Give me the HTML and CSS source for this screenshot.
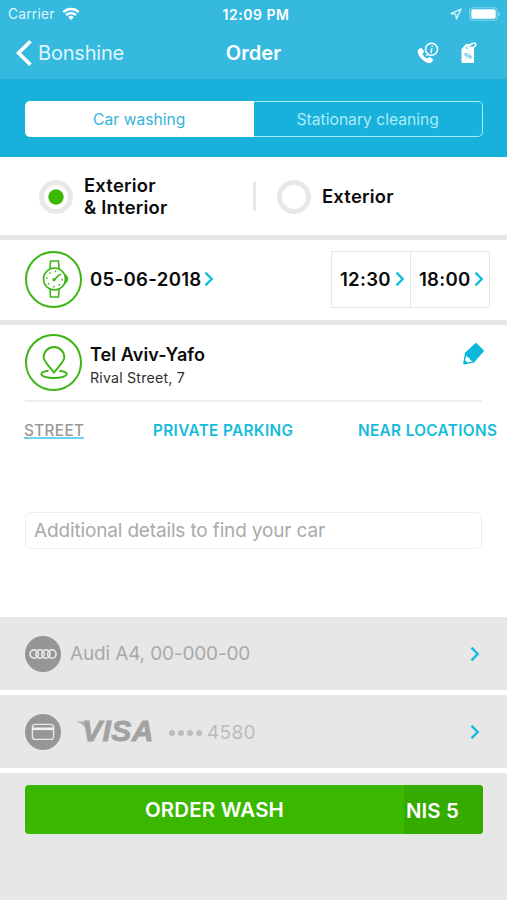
FILE: index.html
```html
<!DOCTYPE html>
<html lang="en">
<head>
<meta charset="utf-8">
<title>Order</title>
<link rel="stylesheet" href="styles.css">
</head>
<body>
<header class="header">
  <div class="status">
    <div class="status-left">
      <span class="carrier">Carrier</span>
      <svg class="wifi" width="18" height="14" viewBox="0 0 18 14" fill="none" stroke="#fff" stroke-width="2.4"><path d="M1.3 5.2a11 11 0 0 1 15.4 0M4.1 8.1a7 7 0 0 1 9.8 0"/><path d="M6.2 10.2a4 4 0 0 1 5.6 0L9 13z" fill="#fff" stroke="none"/></svg>
    </div>
    <span class="clock">12:09 PM</span>
    <div class="status-right">
      <svg width="12" height="12" viewBox="0 0 12 12" fill="none" stroke="#e4f7fc" stroke-width="1.3" stroke-linejoin="round"><path d="M11 1 1 5.7l4.8.5.6 4.8z"/></svg>
      <svg width="32" height="14" viewBox="0 0 32 14"><rect x=".7" y=".7" width="27.6" height="12.6" rx="3.3" fill="none" stroke="#7fd5ec" stroke-width="1.1"/><rect x="2.3" y="2.3" width="24.4" height="9.4" rx="1.8" fill="#fff"/><path d="M29.6 5v4q1.4-.7 1.4-2t-1.4-2" fill="#9fe0f2"/></svg>
    </div>
  </div>
  <nav class="nav">
    <a class="back">
      <svg width="16" height="26" viewBox="0 0 16 26" fill="none" stroke="#fff" stroke-width="3.7"><path d="M14.5 1.3 2.6 13l11.9 11.7"/></svg>
      <span class="back-label">Bonshine</span>
    </a>
    <h1 class="title">Order</h1>
    <div class="actions">
      <svg width="22" height="22" viewBox="0 0 22 22"><path d="M2.2 6.8 4.5 6l2.7 3.6-1.7 2.3c1.2 2.1 2.5 3.4 4.8 4.5l2.3-1.7 3.4 2.6-.8 2.5c-1.4 1.7-3.3 1.9-6.2.4C5 18 2 14.8 1 11.3c-.5-2.2 0-3.6 1.2-4.5z" fill="#fff"/><circle cx="14.5" cy="7.3" r="6" fill="none" stroke="#fff" stroke-width="1.5"/><path d="M10.5 11.5 8.5 14l3.6-.8" fill="#fff"/><path d="M15.2 4.3v.1M14.8 6.8l-.7 3.7" fill="none" stroke="#fff" stroke-width="1.5" stroke-linecap="round"/></svg>
      <svg class="tag" width="16" height="22" viewBox="0 0 16 22"><path d="M.5 7.300 4.800 2h4.700L13 6v13.700a1.300 1.300 0 0 1-1.300 1.300H1.800A1.300 1.300 0 0 1 .5 19.700z" fill="#fff"/><circle cx="6.300" cy="5.700" r="1.300" fill="#36b9df"/><path d="M6.500 5.800c1.500-3 5-5 7.500-4.600 1.600.7.500 3.200-1.600 4.100-1.700.8-3.800.8-5.900.5" fill="#36b9df" fill-opacity=".6" stroke="#fff" stroke-width="1.500"/><g fill="none" stroke="#72c9e3" stroke-width="1.100"><path d="m5.400 16 3.400-4.500"/><circle cx="4.900" cy="12.500" r="1.100"/><circle cx="9.300" cy="15" r="1.100"/></g></svg>
    </div>
  </nav>
</header>
<section class="segment-bar">
  <div class="segment">
    <div class="seg seg-on"><span>Car washing</span></div>
    <div class="seg seg-off"><span>Stationary cleaning</span></div>
  </div>
</section>
<main>
  <section class="types">
    <div class="type type-a"><span class="radio radio-on"></span><span class="type-label">Exterior<br>&amp; Interior</span></div>
    <span class="vline"></span>
    <div class="type"><span class="radio"></span><span class="type-label">Exterior</span></div>
  </section>
  <section class="when">
    <div class="round">
      <svg width="56" height="56" viewBox="0 0 56 56" fill="none" stroke="#3db615" stroke-width="1.6"><circle cx="28.5" cy="28" r="11"/><path d="m24 18.3.5-8.3h8l.5 8.3M24 37.7l.5 8.3h8l.5-8.3"/><path d="M39.7 24.5q3.600 3.500 0 7z" fill="#3db615"/><path d="m28 29 5.500-5.500" stroke-width="1.700"/><circle cx="28" cy="28.700" r="1.600" fill="#3db615" stroke="none"/><circle cx="28.500" cy="28" r="7.600" stroke-width="1.600" stroke-dasharray="1.500 4.469"/></svg>
    </div>
    <div class="date"><span>05-06-2018</span><svg class="chev" width="10" height="16" viewBox="0 0 10 16"><path d="m1.500 1.600 6.200 6.400-6.200 6.400"/></svg></div>
    <div class="times">
      <div class="time"><span>12:30</span><svg class="chev" width="10" height="16" viewBox="0 0 10 16"><path d="m1.500 1.600 6.200 6.400-6.200 6.400"/></svg></div>
      <div class="time"><span>18:00</span><svg class="chev" width="10" height="16" viewBox="0 0 10 16"><path d="m1.500 1.600 6.200 6.400-6.200 6.400"/></svg></div>
    </div>
  </section>
  <section class="where">
    <div class="address">
      <div class="round">
        <svg width="56" height="56" viewBox="0 0 56 56" fill="none" stroke="#3db615" stroke-width="1.900"><path d="M28 37.500C23 30.500 17.700 27 17.700 22.300a10.300 10.300 0 0 1 20.600 0C38.300 27 33 30.500 28 37.500z"/><path d="M22.500 35.800c-4.300.6-7.200 1.800-7.200 3.200 0 2.200 5.700 4 12.700 4s12.700-1.800 12.700-4c0-1.400-2.900-2.600-7.200-3.200"/></svg>
      </div>
      <div class="place"><strong class="city">Tel Aviv-Yafo</strong><span class="street">Rival Street, 7</span></div>
      <svg class="pencil" width="24" height="24" viewBox="0 0 24 24"><path d="M14.300 1.200q.7-.6 1.400 0l7 7q.6.700 0 1.400L13 20.500l-9.500 2q-1.600.2-1.300-1.400L4 10.700z" fill="#09b8da"/><path d="M5.400 12.800Q5.400 15.600 8.600 16q.2 2.800 3.300 3.200l-5.300 1.400-2.500-2.400z" fill="#fff"/></svg>
    </div>
    <div class="tabs"><span class="tab tab-on">STREET</span><span class="tab tab-b">PRIVATE PARKING</span><span class="tab">NEAR LOCATIONS</span></div>
    <div class="details"><span>Additional details to find your car</span></div>
  </section>
</main>
<section class="row">
  <div class="disc"><svg width="28" height="12" viewBox="0 0 28 12" fill="none" stroke="#e6e6e6" stroke-width="1.700"><circle cx="5.200" cy="6" r="4.200"/><circle cx="11.100" cy="6" r="4.200"/><circle cx="16.900" cy="6" r="4.200"/><circle cx="22.800" cy="6" r="4.200"/></svg></div>
  <span class="car">Audi A4, 00-000-00</span>
  <svg class="chev" width="10" height="16" viewBox="0 0 10 16"><path d="m1.500 1.600 6.200 6.400-6.200 6.400"/></svg>
</section>
<section class="row">
  <div class="disc"><svg width="24" height="18" viewBox="0 0 24 18"><rect x="1.400" y="1.400" width="21.200" height="15" rx="3" fill="none" stroke="#e8e8e8" stroke-width="1.400"/><path d="M1.400 4.500h21.200v2.600H1.400z" fill="#f2f2f2"/></svg></div>
  <svg class="flag" width="10" height="22" viewBox="0 0 10 22"><path d="M0 .5h7q2.500.3 2.800 2.500v6Q7 3 0 1.300z" fill="#b2b2b2"/></svg>
  <span class="visa">VISA</span>
  <span class="dots"><i></i><i></i><i></i><i></i></span>
  <span class="digits">4580</span>
  <svg class="chev" width="10" height="16" viewBox="0 0 10 16"><path d="m1.500 1.600 6.200 6.400-6.200 6.400"/></svg>
</section>
<footer class="footer">
  <div class="order"><div class="order-main"><span>ORDER WASH</span></div><div class="price"><span>NIS 5</span></div></div>
</footer>
</body>
</html>
```
FILE: styles.css
```css
* { box-sizing: border-box; }
body { margin: 0; width: 507px; height: 900px; overflow: hidden; display: flex; flex-direction: column; background: #fff; font-family: Inter, "Liberation Sans", sans-serif; color: #0b0b0b; white-space: nowrap; }
svg { display: block; flex: none; }
.header { height: 80px; background: #36b9df; border-bottom: 1px solid #20add4; color: #fff; }
.status { height: 28px; display: grid; grid-template-columns: 1fr auto 1fr; align-items: center; padding: 0 6px 0 8px; }
.status-left, .status-right { display: flex; align-items: center; }
.status-left { gap: 7px; }
.status-right { justify-content: flex-end; gap: 7px; }
.carrier { font-size: 13.8px; letter-spacing: .2px; color: #ddf6fc; }
.clock { font-size: 14px; font-weight: 600; letter-spacing: .5px; margin-left: 3px; }
.nav { height: 50px; display: grid; grid-template-columns: 1fr auto 1fr; align-items: center; padding: 0 30px 1px 16px; }
.back { display: flex; align-items: center; gap: 6px; }
.back-label { font-size: 20px; letter-spacing: -.2px; color: #dff6fc; }
.title { margin: 0 0 0 14px; font-size: 20px; font-weight: 600; letter-spacing: .1px; }
.actions { display: flex; justify-content: flex-end; gap: 22px; }
.segment-bar { height: 77px; background: #17b1dc; padding: 21px 24px 21px 25px; }
.segment { display: flex; height: 36px; }
.seg { flex: 1; display: flex; align-items: center; justify-content: center; font-size: 15.6px; letter-spacing: .03px; color: #aeecf8; }
.seg-on { background: #fff; color: #36b4dc; border-radius: 5px 0 0 5px; }
.seg-off { border: solid #a7e9f8; border-width: 1.5px 1.5px 1.5px 0; border-radius: 0 5px 5px 0; }
.types { height: 83px; border-bottom: 5px solid #e7e7e7; padding: 1px 0 0 39px; display: flex; align-items: center; }
.type { display: flex; align-items: center; gap: 11px; }
.type-a { width: 214px; }
.radio { width: 34px; height: 34px; border: 5px solid #e8e8e8; border-radius: 50%; flex: none; }
.radio-on { background: radial-gradient(circle, #3db800 7.2px, #fff 8px); }
.type-label { font-size: 18.4px; line-height: 21.5px; font-weight: 600; letter-spacing: .23px; }
.vline { width: 3px; height: 29px; background: #e7e7e7; margin-right: 21px; }
.when { height: 85px; border-bottom: 5px solid #e7e7e7; padding: 0 17px 2px 25px; display: flex; align-items: center; }
.round { width: 57px; height: 57px; border: 2px solid #3db615; border-radius: 50%; flex: none; display: flex; align-items: center; justify-content: center; }
.chev { fill: none; stroke: #12bddd; stroke-width: 2.4; }
.date { display: flex; align-items: center; gap: 2px; margin-left: 8px; font-size: 18.6px; letter-spacing: .3px; font-weight: 600; }
.times { margin-left: auto; display: flex; border: 1px solid #e8e8e8; height: 57px; width: 159px; }
.time { flex: 1; display: flex; align-items: center; justify-content: space-between; padding: 0 5px 0 8px; font-size: 18.6px; letter-spacing: .25px; font-weight: 600; }
.time + .time { border-left: 1px solid #e8e8e8; }
.where { height: 292px; padding: 0 25px; }
.address { height: 77px; border-bottom: 2px solid #eee; display: flex; align-items: center; }
.place { margin-left: 8px; display: flex; flex-direction: column; margin-top: 5px; }
.city { font-size: 18px; line-height: 24px; font-weight: 600; letter-spacing: .12px; }
.street { font-size: 14.2px; line-height: 21px; letter-spacing: .2px; color: #303030; }
.pencil { margin-left: auto; margin-right: -3px; margin-bottom: 17px; }
.tabs { display: flex; margin: 19px 0 0 -1px; font-size: 15.3px; line-height: 19px; font-weight: 600; letter-spacing: .36px; color: #16bbdc; }
.tab { flex: none; }
.tab-on { color: #999; font-weight: 500; border-bottom: 2px solid #6fd3eb; height: 18px; width: 60px; margin-right: 69px; }
.tab-b { width: 205px; }
.details { margin-top: 72px; height: 37px; border: 1.5px solid #ededed; border-radius: 6px; padding-left: 8px; display: flex; align-items: center; font-size: 19px; letter-spacing: -.15px; color: #aaa; }
.row { height: 78px; border-bottom: 5px solid #fff; background: #e7e7e7; display: flex; align-items: center; padding: 0 27px 0 25px; }
.row .chev { margin-left: auto; }
.disc { width: 36px; height: 36px; border-radius: 50%; background: #969696; display: flex; align-items: center; justify-content: center; flex: none; }
.car { margin-left: 9px; font-size: 19px; letter-spacing: -.15px; color: #a9a9a9; }
.flag { margin-left: 16px; }
.visa { margin-left: -5px; width: 70px; font-family: "Liberation Sans", sans-serif; font-size: 30px; letter-spacing: .5px; font-weight: 700; font-style: italic; color: #a2a2a2; line-height: 34px; padding-bottom: 1px; -webkit-text-stroke: .9px #a2a2a2; }
.dots { display: flex; gap: 3px; margin-left: 17px; margin-top: 3px; }
.dots i { width: 6px; height: 6px; border-radius: 50%; background: #bcbcbc; }
.digits { margin-left: 5px; font-size: 19px; letter-spacing: .3px; color: #bbb; padding-top: 1px; }
.footer { flex: 1; background: #e7e7e7; padding: 12px 24px 0 25px; }
.order { height: 49px; display: flex; border-radius: 4px; overflow: hidden; background: #3ab800; color: #fff; font-size: 20.4px; font-weight: 600; }
.order-main { flex: 1; display: flex; align-items: center; justify-content: center; letter-spacing: .2px; }
.price { width: 79px; background: #35ab00; display: flex; align-items: center; padding: 2px 0 0 2px; letter-spacing: .1px; }
```
